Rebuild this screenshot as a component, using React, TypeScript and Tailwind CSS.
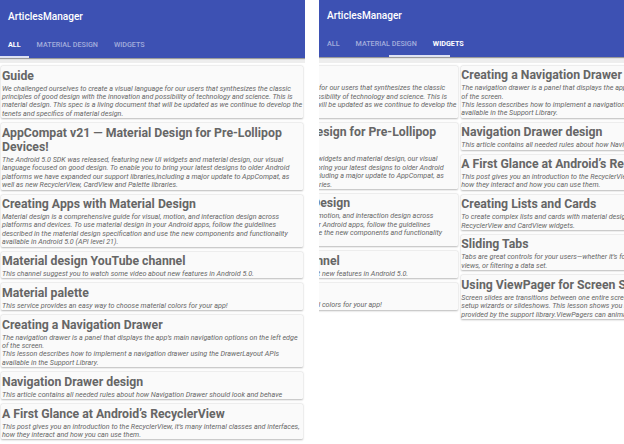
type Article = { title: string[]; body: string[] };

const guide: Article = {
  title: ['Guide'],
  body: [
    'We challenged ourselves to create a visual language for our users that synthesizes the classic',
    'principles of good design with the innovation and possibility of technology and science. This is',
    'material design. This spec is a living document that will be updated as we continue to develop the',
    'tenets and specifics of material design.',
  ],
};
const appCompat: Article = {
  title: ['AppCompat v21 — Material Design for Pre-Lollipop', 'Devices!'],
  body: [
    'The Android 5.0 SDK was released, featuring new UI widgets and material design, our visual',
    'language focused on good design. To enable you to bring your latest designs to older Android',
    'platforms we have expanded our support libraries,including a major update to AppCompat, as',
    'well as new RecyclerView, CardView and Palette libraries.',
  ],
};
const creatingApps: Article = {
  title: ['Creating Apps with Material Design'],
  body: [
    'Material design is a comprehensive guide for visual, motion, and interaction design across',
    'platforms and devices. To use material design in your Android apps, follow the guidelines',
    'described in the material design specification and use the new components and functionality',
    'available in Android 5.0 (API level 21).',
  ],
};
const youTube: Article = {
  title: ['Material design YouTube channel'],
  body: ['This channel suggest you to watch some video about new features in Android 5.0.'],
};
const palette: Article = {
  title: ['Material palette'],
  body: ['This service provides an easy way to choose material colors for your app!'],
};
const creatingDrawer: Article = {
  title: ['Creating a Navigation Drawer'],
  body: [
    'The navigation drawer is a panel that displays the app’s main navigation options on the left edge',
    'of the screen.',
    'This lesson describes how to implement a navigation drawer using the DrawerLayout APIs',
    'available in the Support Library.',
  ],
};
const drawerDesign: Article = {
  title: ['Navigation Drawer design'],
  body: ['This article contains all needed rules about how Navigation Drawer should look and behave'],
};
const recycler: Article = {
  title: ['A First Glance at Android’s RecyclerView'],
  body: [
    'This post gives you an introduction to the RecyclerView, it’s many internal classes and interfaces,',
    'how they interact and how you can use them.',
  ],
};
const lists: Article = {
  title: ['Creating Lists and Cards'],
  body: [
    'To create complex lists and cards with material design styles in your apps, you can use the',
    'RecyclerView and CardView widgets.',
  ],
};
const sliding: Article = {
  title: ['Sliding Tabs'],
  body: [
    'Tabs are great controls for your users—whether it’s for switching between different',
    'views, or filtering a data set.',
  ],
};
const viewPager: Article = {
  title: ['Using ViewPager for Screen Slides'],
  body: [
    'Screen slides are transitions between one entire screen to another and are common with',
    'setup wizards or slideshows. This lesson shows you how to do screen slides with a ViewPager',
    'provided by the support library.ViewPagers can animate screen slides automatically.',
  ],
};

const all = [guide, appCompat, creatingApps, youTube, palette, creatingDrawer, drawerDesign, recycler];
const material = [guide, appCompat, creatingApps, youTube, palette];
const widgets = [creatingDrawer, drawerDesign, recycler, lists, sliding, viewPager];

function Card({ article }: { article: Article }) {
  return (
    <article className="h-fit rounded-[1.5px] bg-[#fafafa] pl-[0.6px] pt-[2.4px] whitespace-nowrap text-[#666] shadow-[0_0.7px_2px_rgba(0,0,0,0.28)]">
      <h2 className="text-[12.26px] leading-[14.2px] font-bold">
        {article.title.map((line) => (
          <span key={line} className="block">{line}</span>
        ))}
      </h2>
      <div className="pt-[1.8px] text-[7.17px] leading-[8.42px] italic">
        {article.body.map((line) => (
          <p key={line}>{line}</p>
        ))}
      </div>
    </article>
  );
}

function Page({ articles }: { articles: Article[] }) {
  return (
    <section className="flex w-[305px] shrink-0 flex-col gap-[5px] pt-[3.2px] pr-[1.6px] pl-[1.4px]">
      {articles.map((a) => (
        <Card key={a.title[0]} article={a} />
      ))}
    </section>
  );
}

function Header({ active, indicator }: { active: string; indicator: string }) {
  return (
    <header className="relative h-[57.5px] shrink-0 bg-[#3d51b3] shadow-[0_1px_1px_rgba(0,0,0,0.35)]">
      <h1 className="pt-[9.5px] pl-2 text-[10.1px] leading-[14px] font-medium text-white">ArticlesManager</h1>
      <nav className="flex gap-4 px-2 pt-[16px] text-[7.2px] leading-[10px] font-medium">
        {['ALL', 'MATERIAL DESIGN', 'WIDGETS'].map((tab) => (
          <span key={tab} className={tab === active ? 'font-bold text-white' : 'text-[#a3addc]'}>{tab}</span>
        ))}
      </nav>
      <div className={`absolute bottom-0 h-[2px] bg-[#dfe2f2] ${indicator}`} />
    </header>
  );
}

export default function App() {
  return (
    <main className="flex h-[444px] w-[624px] gap-[14px] overflow-hidden bg-white font-[Roboto,sans-serif]">
      <div className="flex w-[305px] flex-col overflow-hidden">
        <Header active="ALL" indicator="left-0 w-[28.5px]" />
        <div className="h-[5.5px] shrink-0 bg-[#eee]" />
        <Page articles={all} />
      </div>
      <div className="-mt-[0.5px] flex w-[305px] flex-col overflow-hidden">
        <Header active="WIDGETS" indicator="left-[70px] w-[61px]" />
        <div className="h-[5.5px] shrink-0 bg-[#eee]" />
        <div className="-ml-[164.7px] flex">
          <Page articles={material} />
          <Page articles={widgets} />
        </div>
      </div>
    </main>
  );
}
